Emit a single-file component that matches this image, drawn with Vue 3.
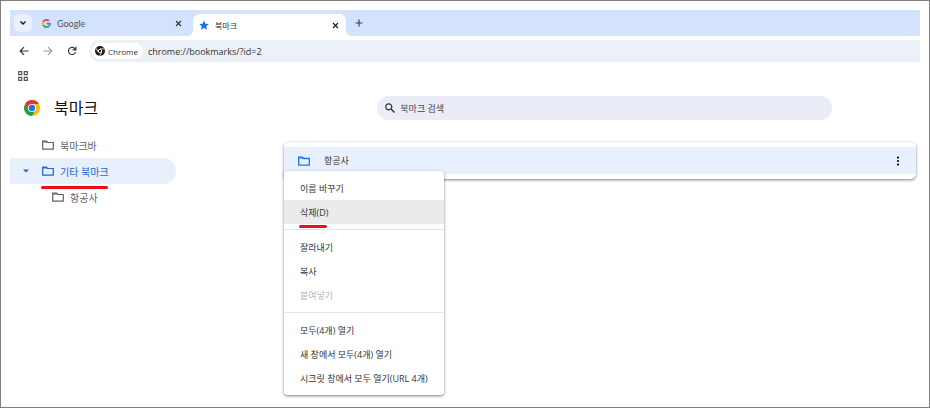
<script setup>
import { ref } from 'vue'

const address = ref('chrome://bookmarks/?id=2')
const keyword = ref('')

const folders = ref([
  { id: 1, name: '북마크바', level: 0 },
  { id: 2, name: '기타 북마크', level: 0, open: true },
  { id: 3, name: '항공사', level: 1 }
])
const selectedId = ref(2)

// 구분선으로 나뉘는 메뉴 그룹
const menuGroups = [
  [
    { label: '이름 바꾸기' },
    { label: '삭제(D)', active: true }
  ],
  [
    { label: '잘라내기' },
    { label: '복사' },
    { label: '붙여넣기', disabled: true }
  ],
  [
    { label: '모두(4개) 열기' },
    { label: '새 창에서 모두(4개) 열기' },
    { label: '시크릿 창에서 모두 열기(URL 4개)' }
  ]
]
const showMenu = ref(true)
</script>

<template>
  <div class="window">
    <header class="tab-strip">
      <button class="tab-search" aria-label="탭 검색">
        <svg width="8" height="8" viewBox="0 0 8 8"><path d="M1.500 2.500 4 5l2.500-2.500" fill="none" stroke="#1f1f1f" stroke-width="1.500" /></svg>
      </button>
      <div class="tab">
        <svg class="favicon" width="9" height="9" viewBox="0 0 48 48">
          <path fill="#ea4335" d="M24 9.500c3.540 0 6.710 1.220 9.210 3.600l6.850-6.850C35.900 2.380 30.470 0 24 0 14.620 0 6.510 5.380 2.560 13.220l7.980 6.190C12.430 13.720 17.740 9.500 24 9.500z" />
          <path fill="#4285f4" d="M46.980 24.550c0-1.570-.15-3.090-.38-4.550H24v9.020h12.940c-.58 2.960-2.260 5.480-4.780 7.180l7.730 6c4.510-4.180 7.090-10.360 7.090-17.650z" />
          <path fill="#fbbc05" d="M10.530 28.590A14.500 14.500 0 0 1 9.770 24c0-1.600.27-3.140.76-4.590l-7.980-6.190A23.900 23.900 0 0 0 0 24c0 3.880.92 7.540 2.560 10.780z" />
          <path fill="#34a853" d="M24 48c6.480 0 11.930-2.130 15.890-5.810l-7.730-6c-2.150 1.450-4.920 2.300-8.160 2.300-6.260 0-11.570-4.220-13.470-9.910l-7.980 6.190C6.510 42.620 14.620 48 24 48z" />
        </svg>
        <button class="tab-title">Google</button>
        <button class="tab-close" aria-label="Google 닫기">
          <svg width="7" height="7" viewBox="0 0 7 7"><path d="m1 1 5 5m0-5-5 5" stroke="#333" stroke-width="1.100" /></svg>
        </button>
      </div>
      <div class="tab current">
        <svg class="favicon" width="10" height="10" viewBox="0 0 24 24"><path fill="#1a73e8" d="m12 1 3.300 7.800 8.200.7-6.200 5.500 1.900 8.200L12 18.900l-7.200 4.300 1.900-8.200L.5 9.500l8.200-.7z" /></svg>
        <button class="tab-title">북마크</button>
        <button class="tab-close" aria-label="북마크 닫기">
          <svg width="7" height="7" viewBox="0 0 7 7"><path d="m1 1 5 5m0-5-5 5" stroke="#1f1f1f" stroke-width="1.200" /></svg>
        </button>
      </div>
      <button class="new-tab" aria-label="새 탭">
        <svg width="8" height="8" viewBox="0 0 8 8"><path d="M4 .5v7M.5 4h7" stroke="#444" stroke-width="1.200" /></svg>
      </button>
    </header>

    <div class="toolbar">
      <button aria-label="뒤로">
        <svg width="10" height="10" viewBox="0 0 10 10"><path d="M9.500 5h-8M5 1.200 1.200 5 5 8.800" fill="none" stroke="#333" stroke-width="1.200" /></svg>
      </button>
      <button aria-label="앞으로">
        <svg width="10" height="10" viewBox="0 0 10 10"><path d="M.5 5h8M5 1.200 8.800 5 5 8.800" fill="none" stroke="#999" stroke-width="1.100" /></svg>
      </button>
      <button aria-label="새로고침">
        <svg width="10" height="10" viewBox="0 0 10 10"><path d="M8.500 6A3.600 3.600 0 1 1 7.800 2.600L9 3.800M9 .5v3.400H5.600" fill="none" stroke="#333" stroke-width="1.100" /></svg>
      </button>
      <div class="omnibox">
        <span class="chip">
          <svg width="10" height="10" viewBox="0 0 24 24">
            <circle cx="12" cy="12" r="12" fill="#1f1f1f" />
            <path d="M12 7h10.500M7.700 14.500 2.500 5.500M16.300 14.500l-5.200 9" stroke="#fff" stroke-width="2" />
            <circle cx="12" cy="12" r="4" fill="#1f1f1f" stroke="#fff" stroke-width="2.200" />
          </svg>
          Chrome
        </span>
        <input v-model="address" type="text" aria-label="주소창">
      </div>
    </div>

    <div class="bookmark-bar">
      <button aria-label="앱">
        <svg width="10" height="10" viewBox="0 0 10 10"><path d="M.7.700h3v3h-3zM6.300.700h3v3h-3zM.7 6.300h3v3h-3zM6.300 6.300h3v3h-3z" fill="none" stroke="#555" stroke-width="1.200" /></svg>
      </button>
    </div>

    <div class="page-header">
      <div class="brand">
        <svg width="16" height="16" viewBox="0 0 48 48">
          <path fill="#db3a2e" d="M24 12h20.800A24 24 0 0 0 3.200 12l10.400 18z" />
          <path fill="#fbbc04" d="M34.400 30 24 48a24 24 0 0 0 20.800-36H24z" />
          <path fill="#2a9a4b" d="M13.600 30 3.200 12A24 24 0 0 0 24 48l10.400-18z" />
          <circle cx="24" cy="24" r="12" fill="#fff" />
          <circle cx="24" cy="24" r="9.500" fill="#1a73e8" />
        </svg>
        <h1>북마크</h1>
      </div>
      <div class="search-area">
        <label class="search">
          <svg width="10" height="10" viewBox="0 0 10 10"><circle cx="3.800" cy="3.800" r="3" fill="none" stroke="#333" stroke-width="1.200" /><path d="m6 6 3.500 3.500" stroke="#333" stroke-width="1.400" /></svg>
          <input v-model="keyword" type="text" placeholder="북마크 검색" aria-label="북마크 검색">
        </label>
      </div>
    </div>

    <div class="content">
      <nav class="sidebar">
        <button
          v-for="folder in folders"
          :key="folder.id"
          class="folder"
          :class="{ selected: folder.id === selectedId, child: folder.level > 0 }"
          @click="selectedId = folder.id"
        >
          <span class="arrow"><svg v-if="folder.open" width="6" height="4" viewBox="0 0 6 4"><path d="M0 .5h6l-3 3z" fill="#1967d2" /></svg></span>
          <svg width="12" height="10" viewBox="0 0 12 10"><path d="M.7 8.300V1.200h3.800l1.200 1.300h5.600v6.600H.7z" fill="none" stroke="currentColor" stroke-width="1.200" /><path d="M.7 1.200h3.800l1.200 1.300h-5z" fill="currentColor" /></svg>
          <span class="folder-name">{{ folder.name }}</span>
        </button>
      </nav>

      <main class="list">
        <div class="list-row">
          <svg width="12" height="10" viewBox="0 0 12 10"><path d="M.7 8.300V1.200h3.800l1.200 1.300h5.600v6.600H.7z" fill="none" stroke="#1a73e8" stroke-width="1.300" /><path d="M.7 1.200h3.800l1.200 1.300h-5z" fill="#1a73e8" /></svg>
          <span class="row-name">항공사</span>
          <button class="more" aria-label="추가 작업" @click="showMenu = !showMenu">
            <svg width="4" height="10" viewBox="0 0 4 10"><circle cx="2" cy="1.500" r="1.100" /><circle cx="2" cy="5" r="1.100" /><circle cx="2" cy="8.500" r="1.100" /></svg>
          </button>
        </div>

        <div v-if="showMenu" class="menu">
          <div v-for="(group, i) in menuGroups" :key="i" class="menu-group">
            <button
              v-for="item in group"
              :key="item.label"
              class="menu-item"
              :class="{ active: item.active }"
              :disabled="item.disabled"
            >{{ item.label }}</button>
          </div>
        </div>
      </main>
    </div>
  </div>
</template>

<style>
body {
  margin: 0;
  background: #fff;
}
</style>

<style scoped>
.window {
  box-sizing: border-box;
  min-height: 100vh;
  padding: 9px;
  border: 1px solid #808080;
  font-family: "Open Sans", "Noto Sans CJK KR", sans-serif;
  font-size: 9px;
  color: #333;
}

button,
input {
  padding: 0;
  border: 0;
  background: none;
  font: inherit;
  color: inherit;
}

input {
  outline: none;
}

svg {
  display: block;
  flex: none;
}

.tab-strip {
  display: flex;
  align-items: center;
  height: 26px;
  padding-left: 4px;
  background: #d3e2fd;
}

.tab-search {
  display: flex;
  align-items: center;
  justify-content: center;
  width: 18px;
  height: 18px;
  border-radius: 6px;
  background: #eaf1fe;
}

.tab {
  box-sizing: border-box;
  display: flex;
  align-items: center;
  width: 153px;
  height: 22px;
  padding: 0 7px 0 6px;
  font-family: Lato, "Noto Sans CJK KR", sans-serif;
}

.tab:not(.current) {
  width: 161px;
  padding: 0 11px 0 10px;
  color: #555;
}

.tab.current {
  position: relative;
  align-self: flex-end;
  border-radius: 7px 7px 0 0;
  background: #fff;
  font-size: 8px;
}

/* 활성 탭 아래쪽의 바깥으로 휘어진 모서리 */
.tab.current::before,
.tab.current::after {
  content: "";
  position: absolute;
  bottom: 0;
  width: 6px;
  height: 6px;
}

.tab.current::before {
  right: 100%;
  background: radial-gradient(circle at 0 0, transparent 6px, #fff 6px);
}

.tab.current::after {
  left: 100%;
  background: radial-gradient(circle at 100% 0, transparent 6px, #fff 6px);
}

.tab-title {
  flex: 1;
  padding-left: 6px;
  text-align: left;
}

.new-tab {
  margin-left: 9px;
}

.toolbar {
  display: flex;
  align-items: center;
  gap: 14px;
  height: 30px;
  padding-left: 9px;
}

.omnibox {
  flex: 1;
  display: flex;
  align-items: center;
  gap: 5px;
  height: 22px;
  margin-left: -2px;
  padding-left: 3px;
  border-radius: 11px 0 0 11px;
  background: #ebf0f9;
}

.chip {
  display: flex;
  align-items: center;
  gap: 3px;
  height: 16px;
  padding: 0 5px 0 3px;
  border-radius: 8px;
  background: #fff;
  font-size: 8px;
}

.omnibox input {
  flex: 1;
}

.bookmark-bar {
  display: flex;
  align-items: center;
  height: 20px;
  padding-left: 8px;
}

.page-header {
  display: flex;
  align-items: center;
  height: 44px;
}

.brand {
  display: flex;
  align-items: center;
  gap: 14px;
  flex: none;
  width: 265px;
  padding-left: 14px;
}

.brand h1 {
  margin: 0;
  font-size: 16px;
  line-height: 22px;
  font-weight: 400;
  color: #111;
}

.search-area {
  flex: 1;
  display: flex;
  justify-content: center;
}

.search {
  box-sizing: border-box;
  display: flex;
  align-items: center;
  gap: 5px;
  width: 72%;
  height: 24px;
  padding: 0 8px;
  border-radius: 12px;
  background: #eaedf7;
}

.search input {
  flex: 1;
}

.search input::placeholder {
  color: #444;
  opacity: 1;
}

.content {
  display: flex;
  align-items: flex-start;
}

.sidebar {
  display: flex;
  flex-direction: column;
  flex: none;
  width: 166px;
  margin-right: 108px;
  padding-top: 2px;
}

.folder {
  display: flex;
  align-items: center;
  height: 26px;
  padding-left: 13px;
  border-radius: 0 13px 13px 0;
  font-size: 10px;
  color: #5f6368;
}

.folder.child {
  padding-left: 23px;
}

.folder.selected {
  position: relative;
  background: #e8f0fe;
  color: #1967d2;
}

.folder.selected::after {
  content: "";
  position: absolute;
  top: 100%;
  left: 31px;
  width: 67px;
  height: 3px;
  margin-top: 2px;
  border-radius: 2px;
  background: #ee1119;
}

.arrow {
  width: 19px;
}

.folder-name {
  padding-left: 6px;
}

.list {
  position: relative;
  flex: 1;
  margin: 12px 4px 0 0;
  padding: 5px 0;
  border-radius: 5px;
  background: #fff;
  box-shadow: 0 1px 3px rgba(0, 0, 0, 0.5);
}

.list-row {
  display: flex;
  align-items: center;
  height: 27px;
  padding: 0 16px 0 14px;
  background: #e8f0fe;
}

.row-name {
  flex: 1;
  padding-left: 14px;
}

.menu {
  position: absolute;
  top: 29px;
  left: 0;
  width: 160px;
  padding: 5px 0;
  border-radius: 3px;
  background: #fff;
  box-shadow: 0 1px 3px rgba(0, 0, 0, 0.5);
}

.menu-group + .menu-group {
  margin-top: 5px;
  padding-top: 5px;
  border-top: 1px solid #e4e4e4;
}

.menu-item {
  display: block;
  width: 100%;
  height: 24px;
  padding-left: 16px;
  text-align: left;
  white-space: nowrap;
}

.menu-item.active {
  position: relative;
  background: #ebebeb;
}

.menu-item.active::after {
  content: "";
  position: absolute;
  top: 100%;
  left: 15px;
  width: 28px;
  height: 3px;
  margin-top: 1px;
  border-radius: 2px;
  background: #ee1119;
}

.menu-item:disabled {
  color: #b5b5b5;
}
</style>
